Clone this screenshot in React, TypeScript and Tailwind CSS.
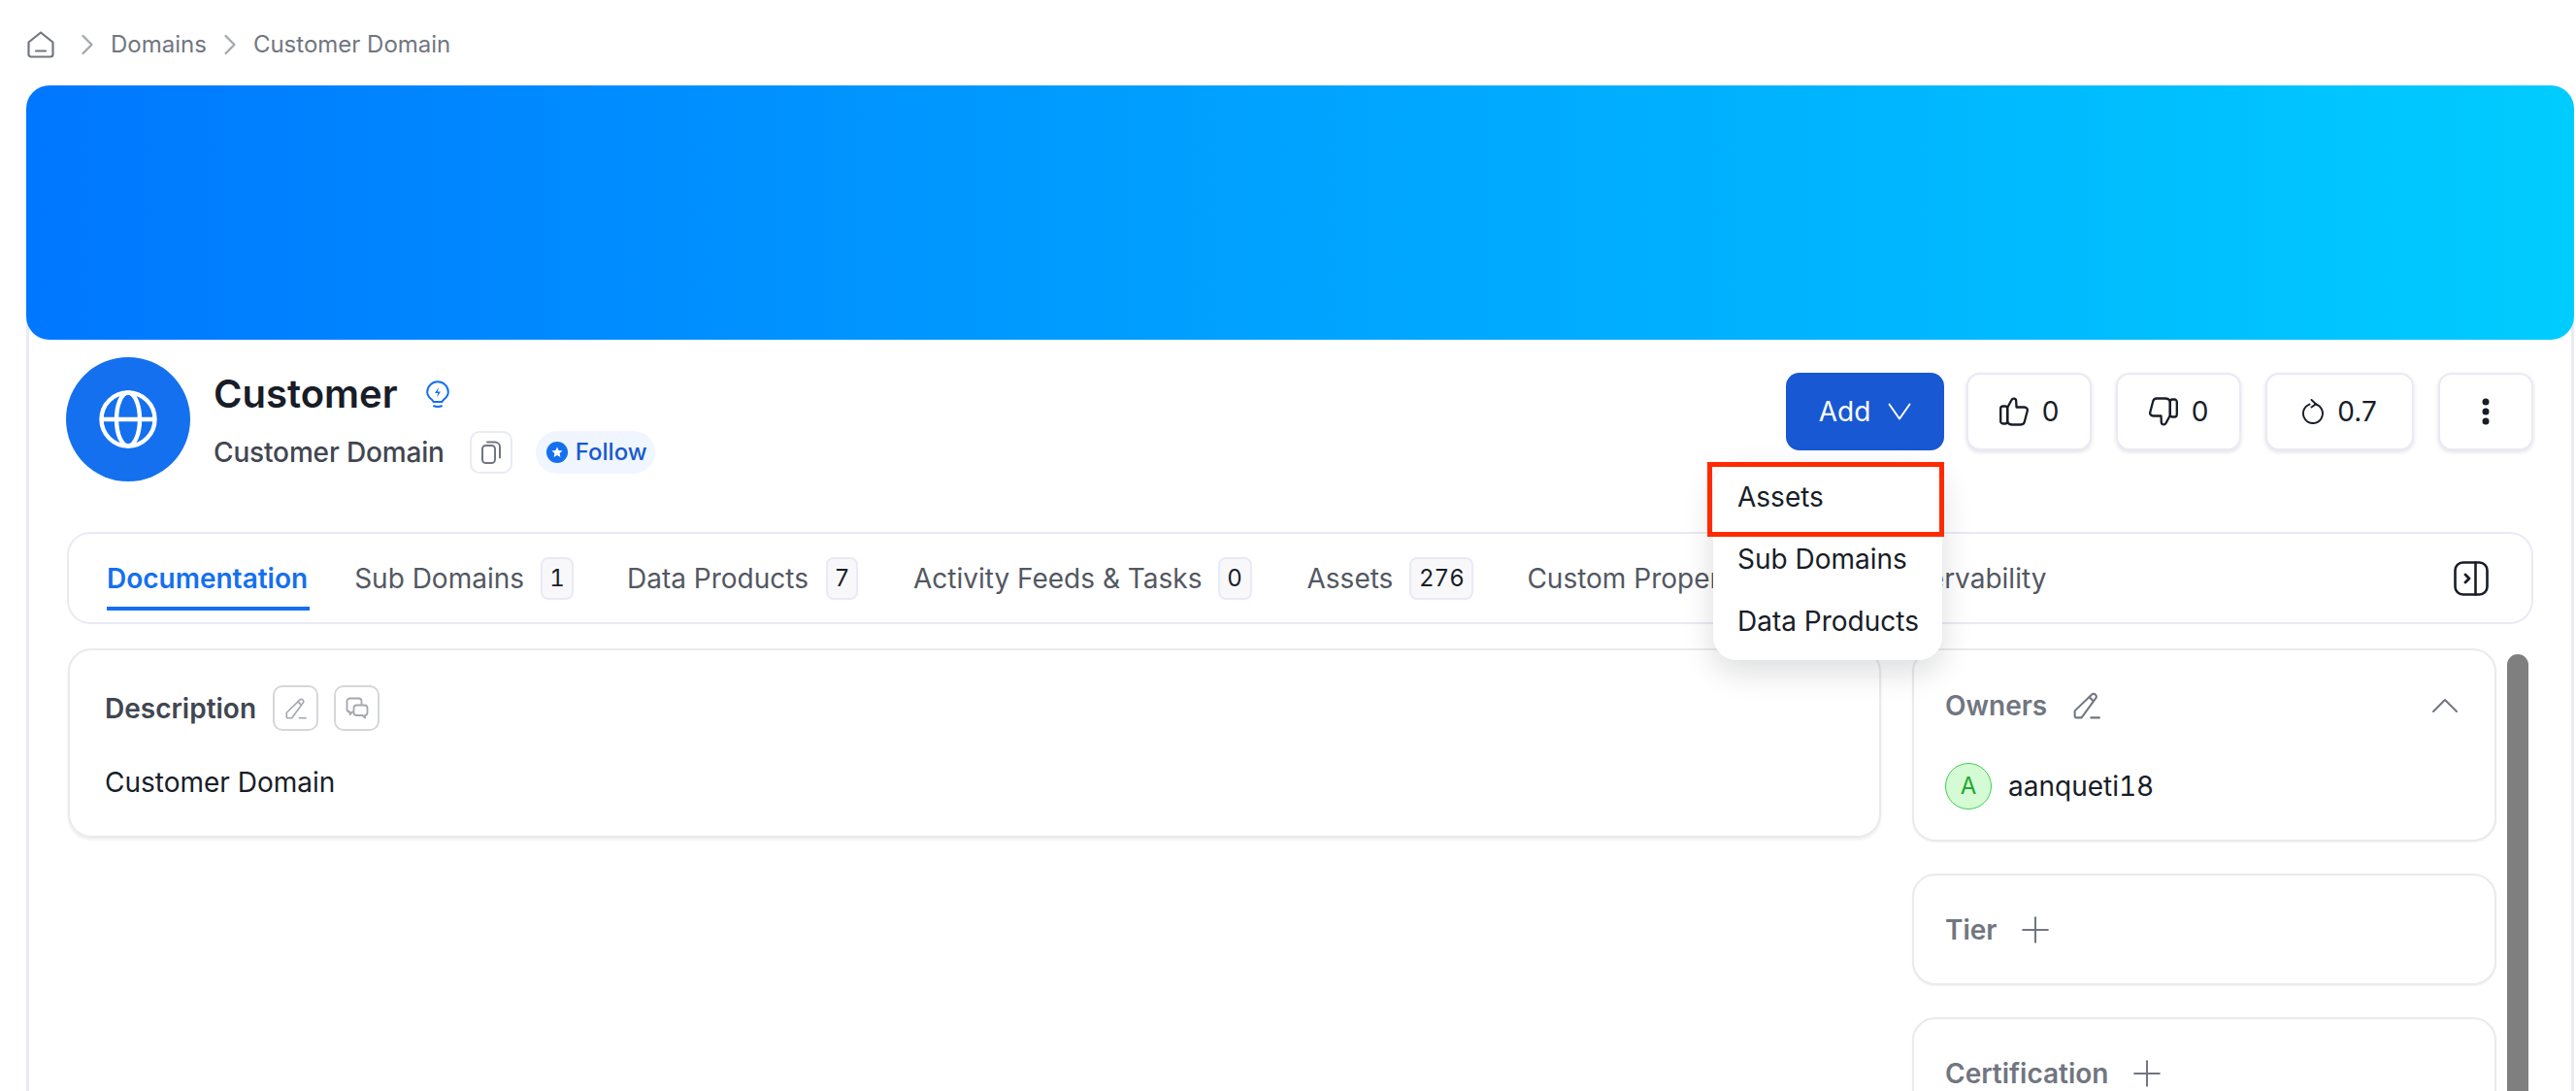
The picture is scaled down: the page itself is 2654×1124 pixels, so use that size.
import { ChevronRight, ChevronUp, Plus } from "lucide-react";

const tab_badge =
  "h-[44px] flex items-center justify-center rounded-[8px] border-2 border-[#e9eaf5] bg-[#f8f8fa] text-[24px] tabular-nums text-[#181d27]";
const action_btn =
  "h-[80px] flex items-center justify-center gap-[14px] rounded-[14px] border-2 border-[#e9eaf5] bg-white shadow-[0_2px_4px_rgba(10,13,40,0.12)] text-[28px] text-[#181d27]";
const side_card =
  "rounded-[24px] border-2 border-[#eaeaec] bg-white shadow-[0_1px_2px_rgba(10,13,18,0.05)]";

const HomeIcon = () => (
  <svg width="28" height="28" viewBox="0 0 28 28" fill="none" stroke="#717680" strokeWidth="2.2" strokeLinejoin="round" strokeLinecap="round">
    <path d="M1.5 11.5 14 1.5l12.5 10V24a2.5 2.5 0 0 1-2.5 2.5H4A2.5 2.5 0 0 1 1.5 24z" />
    <path d="M9 20.5h10" />
  </svg>
);

const GlobeIcon = () => (
  <svg width="60" height="60" viewBox="0 0 60 60" fill="none" stroke="white" strokeWidth="4.4">
    <circle cx="30" cy="30" r="27.5" />
    <ellipse cx="30" cy="30" rx="12" ry="27.5" />
    <path d="M1 30h58" />
  </svg>
);

const BulbIcon = () => (
  <svg width="24" height="28" viewBox="0 0 24 28" fill="none" stroke="#1470ef" strokeWidth="2" strokeLinecap="round" strokeLinejoin="round">
    <path d="M7.5 22C7 19.5 1.200 18 1.200 12a10.800 10.800 0 0 1 21.600 0C22.800 18 17 19.500 16.500 22z" />
    <path d="M8 26.300q4 1.500 8 0" />
    <path d="M13 7 9 13h3.200L11 17.500l4-6h-3.200z" fill="#1470ef" stroke="none" />
  </svg>
);

const CopyIcon = () => (
  <svg width="20" height="24" viewBox="0 0 20 24" fill="none" stroke="#717680" strokeWidth="2" strokeLinejoin="round" strokeLinecap="round">
    <rect x="1" y="5" width="13" height="18" rx="3.500" />
    <path d="M6 1.500h8a5 5 0 0 1 5 5v11" />
  </svg>
);

const StarDot = () => (
  <svg width="22" height="22" viewBox="0 0 22 22">
    <circle cx="11" cy="11" r="11" fill="#1470ef" />
    <path d="m11 5.500 1.600 3.600 3.900.4-2.900 2.600.8 3.900-3.400-2-3.400 2 .8-3.900-2.900-2.600 3.900-.4z" fill="white" />
  </svg>
);

const ThumbIcon = ({ className }: { className?: string }) => (
  <svg className={className} width="30" height="30" viewBox="0 0 30 30" fill="none" stroke="#181d27" strokeWidth="2.300" strokeLinejoin="round" strokeLinecap="round">
    <rect x="1.200" y="9.500" width="7" height="18" rx="2.500" />
    <path d="M8.200 11 12.500 3c1-2 4.500-2 4.700 1l.3 6.500h8c2.500 0 3.800 1.800 3.200 4l-2.900 11c-.5 2-1.800 3-3.800 3h-9c-2.500 0-4-1-4.800-3z" />
  </svg>
);

const RefreshIcon = () => (
  <svg width="22" height="26" viewBox="0 0 22 26" fill="none" stroke="#181d27" strokeWidth="1.900" strokeLinecap="round" strokeLinejoin="round">
    <path d="M13 5.200a10 10 0 1 1-5.500.4" />
    <path d="M9.500 1 14 5.200 9.500 8.500" />
  </svg>
);

const MoreDots = () => (
  <svg width="10" height="28" viewBox="0 0 10 28" fill="#181d27">
    <circle cx="5" cy="4" r="3.500" />
    <circle cx="5" cy="14" r="3.500" />
    <circle cx="5" cy="24" r="3.500" />
  </svg>
);

const PanelIcon = () => (
  <svg width="36" height="36" viewBox="0 0 36 36" fill="none" stroke="#181d27" strokeWidth="2.600" strokeLinecap="round" strokeLinejoin="round">
    <rect x="1.500" y="1.500" width="33" height="33" rx="8" />
    <path d="M22.500 1.500v33" />
    <path d="m12 14 4 4-4 4" strokeWidth="2.800" />
  </svg>
);

const PencilIcon = ({ color, size, sw }: { color: string; size: number; sw: number }) => (
  <svg width={size} height={size} viewBox="0 0 26 26" fill="none" stroke={color} strokeWidth={sw} strokeLinecap="round" strokeLinejoin="round">
    <path d="M17.800 2.300a2.300 2.300 0 0 1 3.300 0l.4.400a2.300 2.300 0 0 1 0 3.300L8 24.500H3a1.500 1.500 0 0 1-1.500-1.500v-5z" />
    <path d="m15.500 4.800 3.700 3.700" />
    <path d="M17 24.500h8" />
  </svg>
);

const ChatIcon = () => (
  <svg width="24" height="24" viewBox="0 0 24 24" fill="none" stroke="#a4a7ae" strokeWidth="1.800" strokeLinejoin="round" strokeLinecap="round">
    <path d="M8 15.500H7L4.500 18v-2.500A3 3 0 0 1 1.500 13V4.500a3 3 0 0 1 3-3h9a3 3 0 0 1 3 3V8" />
    <path d="M11.500 8.500h8a3 3 0 0 1 3 3V16a3 3 0 0 1-2.500 3v2.500L17.500 19h-6a3 3 0 0 1-3-3v-4.500a3 3 0 0 1 3-3z" />
  </svg>
);

const Tab = ({ label, count, badgeClass, className }: { label: string; count?: string; badgeClass?: string; className?: string }) => (
  <div className={`flex items-center text-[28px] text-[#535862] whitespace-nowrap ${className ?? ""}`}>
    {label}
    {count && <span className={`${tab_badge} ${badgeClass ?? ""}`}>{count}</span>}
  </div>
);

const Crumbs = () => (
  <div className="h-[88px] flex items-center pl-[28px] pt-[4px] text-[24px] text-[#717680]">
    <HomeIcon />
    <ChevronRight className="ml-[16px] w-[36px] h-[36px] text-[#a4a7ae]" strokeWidth={1.500} />
    <span className="ml-[6px]">Domains</span>
    <ChevronRight className="ml-[6px] w-[36px] h-[36px] text-[#a4a7ae]" strokeWidth={1.500} />
    <span className="ml-[6px]">Customer Domain</span>
  </div>
);

const Header = () => (
  <div className="h-[198px] pt-[18px] flex justify-between pl-[38px] pr-[39px]">
    <div className="flex items-start">
      <div className="w-[128px] h-[128px] rounded-full bg-[#1470ef] flex items-center justify-center">
        <GlobeIcon />
      </div>
      <div className="ml-[24px] flex flex-col">
        <div className="flex items-center h-[76px]">
          <span className="text-[40px] font-semibold text-[#181d27]">Customer</span>
          <span className="ml-[29px] flex"><BulbIcon /></span>
        </div>
        <div className="flex items-center">
          <span className="text-[28px] font-medium tracking-[-0.15px] text-[#414651]">Customer Domain</span>
          <span className="ml-[26px] w-[44px] h-[44px] rounded-[10px] border-2 border-[#e9eaf5] flex items-center justify-center">
            <CopyIcon />
          </span>
          <span className="ml-[24px] h-[44px] w-[123px] rounded-full bg-[#eff6ff] flex items-center pl-[11px] gap-[8px] text-[24px] font-medium text-[#1759d1]">
            <StarDot /> Follow
          </span>
        </div>
      </div>
    </div>
    <div className="flex items-start gap-[25px] pt-[16px]">
      <div className="mr-[-2px] h-[80px] w-[163px] rounded-[14px] bg-[#1858d3] flex items-center justify-center gap-[18px] text-[28px] text-white">
        Add
        <svg width="24" height="18" viewBox="0 0 24 18" fill="none" stroke="white" strokeWidth="2" strokeLinecap="round" strokeLinejoin="round">
          <path d="M1.500 1.500 12 16.500 22.500 1.500" />
        </svg>
      </div>
      <div className={`${action_btn} w-[129px]`}><ThumbIcon /> 0</div>
      <div className={`${action_btn} w-[129px]`}><ThumbIcon className="rotate-180" /> 0</div>
      <div className={`${action_btn} w-[153px]`}><RefreshIcon /> 0.7</div>
      <div className={`${action_btn} w-[98px]`}><MoreDots /></div>
    </div>
  </div>
);

const Tabs = () => (
  <div className="ml-[39px] mr-[39px] h-[95px] rounded-[24px] border-2 border-[#e9eaf5] flex items-center pl-[39px] pr-[44px]">
    <div className="relative flex items-center text-[28px] font-semibold text-[#1470ef]">
      Documentation
      <span className="absolute left-0 right-[-2px] top-[50px] h-[4px] bg-[#1470ef]" />
    </div>
    <Tab label="Sub Domains" count="1" badgeClass="ml-[17px] w-[34px]" className="ml-[48px]" />
    <Tab label="Data Products" count="7" badgeClass="ml-[18px] w-[33px]" className="ml-[55px]" />
    <Tab label="Activity Feeds & Tasks" count="0" badgeClass="ml-[16px] w-[35px]" className="ml-[57px]" />
    <Tab label="Assets" count="276" badgeClass="ml-[17px] w-[66px]" className="ml-[57px]" />
    <Tab label="Custom Properties" count="0" badgeClass="ml-[17px] w-[35px]" className="ml-[55px]" />
    <Tab label="Observability" className="ml-[62px]" />
    <span className="ml-auto flex"><PanelIcon /></span>
  </div>
);

const Sidebar = () => (
  <div className="w-[602px] shrink-0 flex flex-col gap-[33px]">
    <div className={`${side_card} h-[199px] shrink-0 px-[32px] pt-[38px]`}>
      <div className="flex items-center h-[38px] text-[28px] font-semibold text-[#717680]">
        Owners
        <span className="ml-[27px] flex"><PencilIcon color="#717680" size={28} sw={1.900} /></span>
        <ChevronUp className="ml-auto mr-[-5px] w-[48px] h-[48px] text-[#717680]" strokeWidth={1} />
      </div>
      <div className="flex items-center mt-[40px] text-[28px] text-[#181d27]">
        <span className="w-[48px] h-[48px] rounded-full border-[1px] border-[#3ecf4e] bg-[#d5fbd5] flex items-center justify-center text-[24px] text-[#1fa82f]">
          A
        </span>
        <span className="ml-[17px] tabular-nums">aanqueti18</span>
      </div>
    </div>
    <div className={`${side_card} h-[115px] shrink-0 px-[32px] flex items-center text-[28px] font-semibold text-[#717680]`}>
      Tier
      <Plus className="ml-[18px] w-[44px] h-[44px]" strokeWidth={1.100} />
    </div>
    <div className={`${side_card} h-[115px] shrink-0 px-[32px] flex items-center text-[28px] font-semibold text-[#717680]`}>
      Certification
      <Plus className="ml-[18px] w-[44px] h-[44px]" strokeWidth={1.100} />
    </div>
  </div>
);

const Description = () => (
  <div className="w-[1868px] h-[195px] shrink-0 rounded-[24px] border-2 border-[#eaeaec] shadow-[0_2px_3px_rgba(10,13,18,0.08)] pl-[36px] pt-[36px]">
    <div className="flex items-center">
      <span className="text-[28px] font-semibold text-[#414651]">Description</span>
      <span className="ml-[17px] w-[47px] h-[47px] rounded-[10px] border-2 border-[#d5d7da] flex items-center justify-center">
        <PencilIcon color="#a4a7ae" size={22} sw={1.900} />
      </span>
      <span className="ml-[16px] w-[47px] h-[47px] rounded-[10px] border-2 border-[#d5d7da] flex items-center justify-center">
        <ChatIcon />
      </span>
    </div>
    <div className="mt-[32px] text-[28px] text-[#181d27]">Customer Domain</div>
  </div>
);

const AddMenu = () => (
  <div className="absolute left-[1765px] top-[477px] w-[236px] h-[203px] rounded-[24px] bg-white shadow-[0_12px_32px_rgba(10,13,18,0.14)] pl-[25px] pt-[3px] text-[28px] text-[#181d27]">
    <div className="h-[64px] flex items-center">Assets</div>
    <div className="h-[64px] flex items-center">Sub Domains</div>
    <div className="h-[64px] flex items-center">Data Products</div>
  </div>
);

export default function App() {
  return (
    <div className="relative w-[2654px] h-[1124px] overflow-hidden bg-white font-['Inter',sans-serif]">
      <Crumbs />
      <div className="ml-[27px] w-[2625px] h-[1036px] rounded-t-[24px] border-x-[3px] border-[#e9eaf5]">
        <div className="-mx-[3px] h-[262px] rounded-[24px] bg-gradient-to-r from-[#0077ff] to-[#00ccff]" />
        <Header />
        <Tabs />
        <div className="ml-[40px] mt-[25px] flex gap-[32px] items-start h-full">
          <Description />
          <Sidebar />
          <div className="ml-[-21px] w-[22px] h-full mt-[6px] shrink-0 rounded-t-[11px] bg-[#7f7f7f]" />
        </div>
      </div>
      <AddMenu />
      <div className="absolute left-[1759px] top-[476px] w-[244px] h-[77px] border-[5px] border-[#ff2a00]" />
    </div>
  );
}
